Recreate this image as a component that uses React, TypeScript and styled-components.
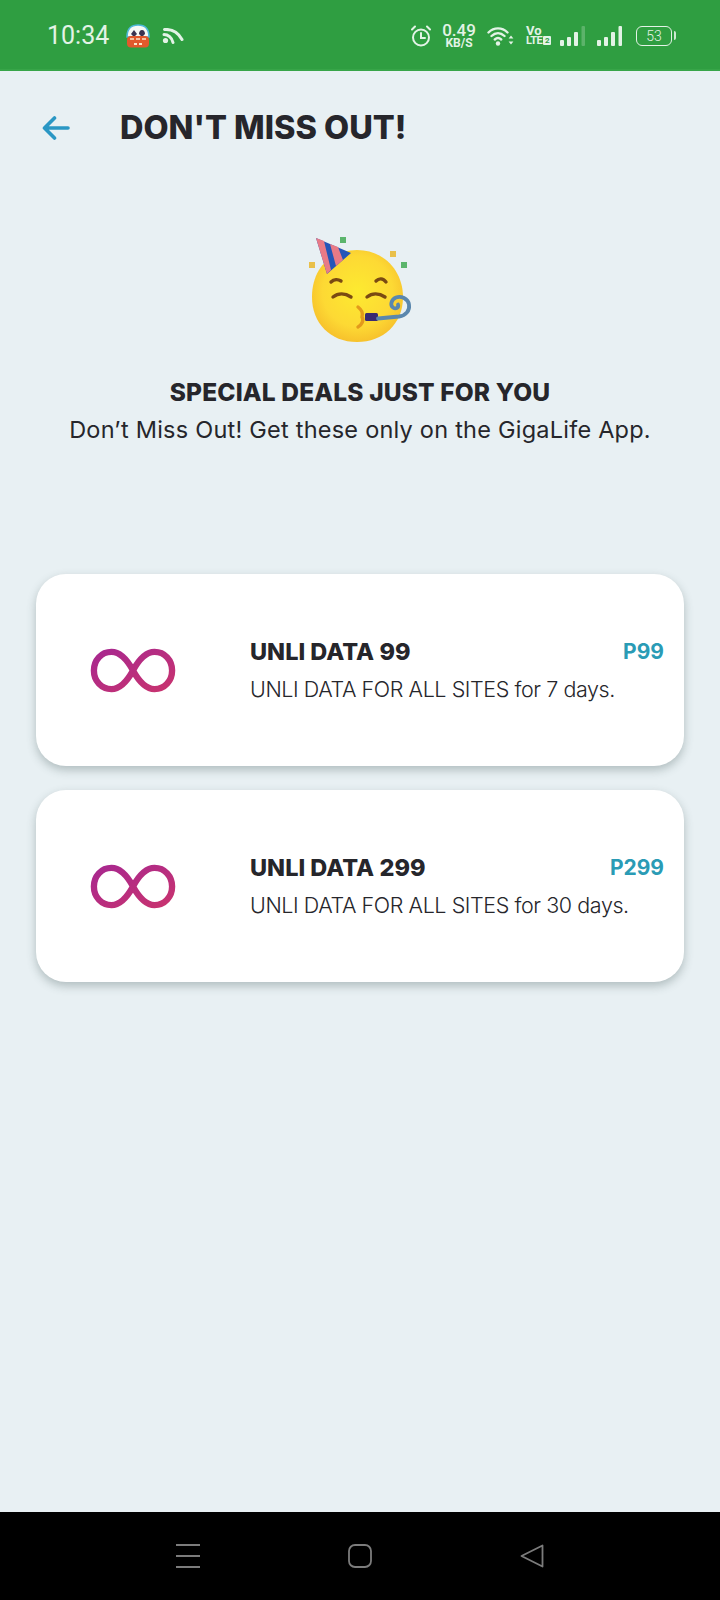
import React from "react";
import styled, { createGlobalStyle } from "styled-components";

const ink = "#26262b";
const teal = "#2a9bb5";
const statusInk = "#e3f3e6";
const fontStack = '"Inter", "Liberation Sans", sans-serif';

const GlobalStyle = createGlobalStyle`
  html, body { margin: 0; padding: 0; background: #e8f0f3; }
  body { font-family: ${fontStack}; }
`;

const Screen = styled.div`
  width: 720px;
  height: 1600px;
  display: flex;
  flex-direction: column;
  background: #e8f0f3;
  overflow: hidden;
`;

const StatusBar = styled.div`
  height: 71px;
  flex: none;
  box-sizing: border-box;
  background: #2f9e41;
  border-bottom: 2px solid #37a548;
  display: flex;
  align-items: center;
  justify-content: space-between;
  padding: 2px 47px 0 47px;
  color: ${statusInk};
`;

const StatusGroup = styled.div<{ $gap: number }>`
  display: flex;
  align-items: center;
  gap: ${(p) => p.$gap}px;
`;

const Clock = styled.span`
  font-family: "Roboto", sans-serif;
  font-size: 25px;
  margin-right: 5px;
`;

const Speed = styled.div`
  width: 32px;
  display: flex;
  flex-direction: column;
  align-items: center;
  font-family: "Roboto", sans-serif;
  font-weight: 500;
  font-size: 17px;
  line-height: 14px;
  small {
    font-size: 12px;
    line-height: 12px;
    font-weight: 700;
  }
`;

const Volte = styled.div`
  width: 22px;
  display: flex;
  flex-direction: column;
  font-family: "Roboto", sans-serif;
  font-weight: 700;
  line-height: 10px;
  font-size: 13px;
`;

const LteRow = styled.span`
  display: flex;
  align-items: center;
  gap: 1px;
  font-size: 11px;
  letter-spacing: -0.5px;
`;

const SimBadge = styled.span`
  flex: none;
  width: 8px;
  height: 9px;
  border-radius: 1px;
  background: ${statusInk};
  color: #2f9e41;
  font-size: 8px;
  line-height: 9px;
  letter-spacing: 0;
  text-align: center;
`;

const Battery = styled.div`
  width: 36px;
  height: 20px;
  box-sizing: border-box;
  border: 1.5px solid ${statusInk};
  border-radius: 6px;
  margin: 0 1px 0 2px;
  font-family: "Roboto", sans-serif;
  font-size: 14px;
  font-weight: 300;
  display: flex;
  align-items: center;
  justify-content: center;
  position: relative;
  &::after {
    content: "";
    position: absolute;
    right: -5px;
    top: 4px;
    width: 2px;
    height: 9px;
    background: #cfe8d3;
    border-radius: 0 2px 2px 0;
  }
`;

const Header = styled.header`
  display: flex;
  align-items: center;
  gap: 50px;
  padding: 33px 0 0 42px;
  height: 47px;
  flex: none;
`;

const Title = styled.h1`
  margin: 0;
  font-size: 32.5px;
  line-height: 47px;
  font-weight: 800;
  color: ${ink};
`;

const Hero = styled.section`
  display: flex;
  flex-direction: column;
  align-items: center;
  padding-top: 81px;
  flex: none;
`;

const HeroTitle = styled.h2`
  margin: 27px 0 0;
  font-size: 24.5px;
  line-height: 36px;
  font-weight: 800;
  letter-spacing: 0.15px;
  color: ${ink};
`;

const HeroText = styled.p`
  margin: 2px 0 0;
  font-size: 23.5px;
  line-height: 36px;
  font-weight: 400;
  letter-spacing: 0.23px;
  color: ${ink};
`;

const Cards = styled.div`
  display: flex;
  flex-direction: column;
  gap: 24px;
  padding: 126px 36px 0;
  flex: 1;
`;

const Card = styled.article`
  height: 192px;
  background: #fff;
  border-radius: 30px;
  box-shadow: 0 4px 10px rgba(60, 80, 80, 0.32);
  display: flex;
  align-items: center;
  padding: 0 20px 0 54px;
`;

const Info = styled.div`
  margin-left: 74px;
  flex: 1;
  display: flex;
  flex-direction: column;
  gap: 3px;
`;

const TitleRow = styled.div`
  display: flex;
  justify-content: space-between;
  align-items: center;
`;

const PlanName = styled.span`
  font-size: 23.5px;
  line-height: 34px;
  font-weight: 800;
  letter-spacing: 0.03px;
  color: ${ink};
`;

const Price = styled.span`
  font-size: 21px;
  font-weight: 700;
  color: ${teal};
`;

const PlanText = styled.span`
  font-size: 21.5px;
  line-height: 34px;
  font-weight: 300;
  letter-spacing: -0.42px;
  color: ${ink};
  white-space: nowrap;
`;

const NavBar = styled.nav`
  height: 88px;
  flex: none;
  background: #000;
  display: flex;
  align-items: center;
  justify-content: center;
  gap: 148px;
`;

const BackArrow = () => (
  <svg width="28" height="24" viewBox="0 0 28 24" fill="none" stroke="#2a97c4" strokeWidth="3.6" strokeLinecap="round" strokeLinejoin="round">
    <path d="M26 12H3M12.500 2 2.500 12l10 10" />
  </svg>
);

const GameIcon = () => (
  <svg width="26" height="24" viewBox="0 0 26 24">
    <path d="M2 13C2 4 7 1 13 1s11 3 11 12z" fill="#f6f8f4" stroke="#4fb8d8" strokeWidth="1.600" />
    <path d="M9 6l3 4-3 3-3-3zM17 6c2 0 3 2 3 4l-3 3-3-3c0-2 1-4 3-4z" fill="#3a3350" />
    <rect x="2" y="12" width="22" height="11.500" rx="4" fill="#e2592c" />
    <path d="M5 15h4M11 15h4M17 15h4" stroke="#fbe7c9" strokeWidth="1.600" />
    <path d="M9 20h3M14 20h3" stroke="#fbe7c9" strokeWidth="2" />
  </svg>
);

const CastIcon = () => (
  <svg width="22" height="16" viewBox="0 0 22 16" fill="none" stroke={statusInk} strokeWidth="3" strokeLinecap="round">
    <circle cx="3.500" cy="12.500" r="2.600" fill={statusInk} stroke="none" />
    <path d="M2 6.500c4 0 8 3 9 8M2.500 1.500C10 1 16.500 5 20 11.500" />
  </svg>
);

const AlarmIcon = () => (
  <svg width="20" height="22" viewBox="0 0 20 22" fill="none" stroke={statusInk} strokeWidth="2" strokeLinecap="round">
    <circle cx="10" cy="12.500" r="8" />
    <path d="M10 8v5h4M1 4.500 4 1.500M19 4.500 16 1.500" />
  </svg>
);

const WifiIcon = () => (
  <svg width="27" height="20" viewBox="0 0 27 20" fill="none" stroke={statusInk} strokeWidth="2.400" strokeLinecap="round">
    <path d="M1.500 6.500C7 1 15 1 20.500 6.500M4.500 10c4-3.800 9-3.800 13 0M7.800 13.500c2-1.800 4.400-1.800 6.400 0" />
    <circle cx="11" cy="17.500" r="2.200" fill={statusInk} stroke="none" />
    <path d="M24 9.500l-2.400 3h4.800zM24 18.500l-2.400-3h4.800z" fill={statusInk} stroke="none" />
  </svg>
);

const SignalIcon = ({ dim }: { dim?: boolean }) => (
  <svg width="25" height="20" viewBox="0 0 25 20" fill={statusInk}>
    <rect x="0" y="14" width="4" height="6" rx="1" />
    <rect x="7" y="11" width="4" height="9" rx="1" />
    <rect x="14" y="6" width="4" height="14" rx="1" />
    <rect x="21.500" y="0" width="3.500" height="20" rx="1" opacity={dim ? 0.25 : 1} />
  </svg>
);

const PartyEmoji = () => (
  <svg width="110" height="115" viewBox="305 232 110 115">
    <defs>
      <radialGradient id="face" cx="50%" cy="45%" r="55%">
        <stop offset="0%" stopColor="#fdea30" />
        <stop offset="70%" stopColor="#fdd934" />
        <stop offset="100%" stopColor="#f7c22c" />
      </radialGradient>
    </defs>
    <rect x="340" y="237" width="6" height="6" fill="#5bb56c" />
    <rect x="390" y="251" width="6" height="6" fill="#e9c04a" />
    <rect x="401" y="262" width="6" height="6" fill="#5bb56c" />
    <rect x="309" y="262" width="6" height="6" fill="#e9c04a" />
    <path d="M312 297c0-28 18-47 45-47 27 0 46 21 46 47 0 27-20 45-46 45-27 0-45-19-45-45z" fill="url(#face)" />
    <path d="M316 238l35 15-24 21z" fill="#2456b8" />
    <path d="M316 238l8 3 7 29-4 4zM330 244l8 3 5 13-7 6z" fill="#e87a86" />
    <g fill="none" stroke="#7a4a12" strokeWidth="3.400" strokeLinecap="round">
      <path d="M331 282c3-3 7-3 10-1M376 281c3-3 7-3 10 1" />
      <path d="M333 297c5-4 12-4 18 0M367 297c5-4 12-4 18 0" />
    </g>
    <path d="M358 307c4 3 5 7 4 10 2 3 0 8-4 10" fill="none" stroke="#e39a1b" strokeWidth="3.400" strokeLinecap="round" />
    <rect x="365" y="313" width="13" height="8" rx="1.500" fill="#3a2a72" />
    <path d="M378 318.500l21-2c7-1 11-6 10-12-1-6-8-9-13-7-5 2-6 8-3 10 3 2 6 0 5-3" fill="none" stroke="#5a87ad" strokeWidth="3.800" strokeLinecap="round" />
  </svg>
);

const InfinityLogo = ({ id }: { id: string }) => (
  <svg width="86" height="45" viewBox="0 0 88 46" fill="none" style={{ flex: "none" }}>
    <defs>
      <linearGradient id={id} x1="0" y1="0" x2="1" y2="1">
        <stop offset="0%" stopColor="#a8288f" />
        <stop offset="100%" stopColor="#c8336f" />
      </linearGradient>
    </defs>
    <path
      d="M44 23C38 12 31 4 22 4 11.500 4 4 12.500 4 23s7.500 19 18 19c9 0 16-8 22-19 6-11 13-19 22-19 10.500 0 18 8.500 18 19s-7.500 19-18 19c-9 0-16-8-22-19z"
      stroke={`url(#${id})`}
      strokeWidth="6.500"
    />
  </svg>
);

const plans = [
  { id: "inf99", name: "UNLI DATA 99", price: "P99", text: "UNLI DATA FOR ALL SITES for 7 days." },
  { id: "inf299", name: "UNLI DATA 299", price: "P299", text: "UNLI DATA FOR ALL SITES for 30 days." },
];

export default function App() {
  return (
    <Screen>
      <GlobalStyle />
      <StatusBar>
        <StatusGroup $gap={11}>
          <Clock>10:34</Clock>
          <GameIcon />
          <CastIcon />
        </StatusGroup>
        <StatusGroup $gap={12}>
          <AlarmIcon />
          <Speed>
            0.49
            <small>KB/S</small>
          </Speed>
          <WifiIcon />
          <Volte>
            <span>Vo</span>
            <LteRow>
              LTE<SimBadge>2</SimBadge>
            </LteRow>
          </Volte>
          <SignalIcon dim />
          <SignalIcon />
          <Battery>53</Battery>
        </StatusGroup>
      </StatusBar>
      <Header>
        <BackArrow />
        <Title>DON'T MISS OUT!</Title>
      </Header>
      <Hero>
        <PartyEmoji />
        <HeroTitle>SPECIAL DEALS JUST FOR YOU</HeroTitle>
        <HeroText>Don’t Miss Out! Get these only on the GigaLife App.</HeroText>
      </Hero>
      <Cards>
        {plans.map((plan) => (
          <Card key={plan.id}>
            <InfinityLogo id={plan.id} />
            <Info>
              <TitleRow>
                <PlanName>{plan.name}</PlanName>
                <Price>{plan.price}</Price>
              </TitleRow>
              <PlanText>{plan.text}</PlanText>
            </Info>
          </Card>
        ))}
      </Cards>
      <NavBar>
        <svg width="24" height="24" viewBox="0 0 24 24" stroke="#7c7c7c" strokeWidth="2">
          <path d="M0 1h24M0 12h24M0 23h24" />
        </svg>
        <svg width="24" height="24" viewBox="0 0 24 24" fill="none" stroke="#7c7c7c" strokeWidth="1.800">
          <rect x="1" y="1" width="22" height="22" rx="6" />
        </svg>
        <svg width="24" height="24" viewBox="0 0 24 24" fill="none" stroke="#7c7c7c" strokeWidth="1.800" strokeLinejoin="round">
          <path d="M22.500 1.500v21L1.500 12z" />
        </svg>
      </NavBar>
    </Screen>
  );
}
